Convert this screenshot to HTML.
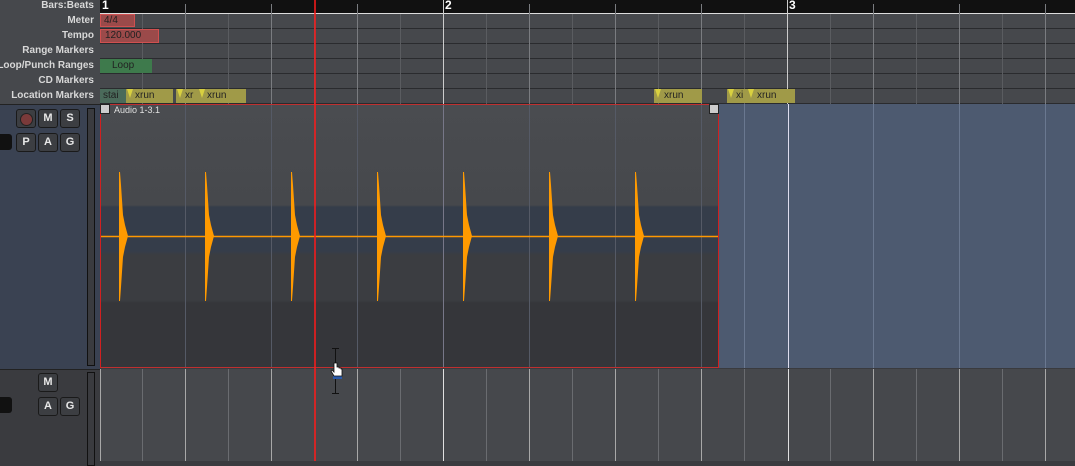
<!DOCTYPE html>
<html><head><style>
body{margin:0;width:1075px;height:461px;overflow:hidden;background:#3a3b3f;font-family:"Liberation Sans",sans-serif;position:relative}
.lab{position:absolute;right:981px;text-align:right;font-size:10px;font-weight:bold;color:#d8d8d8;height:15px;line-height:15px;white-space:nowrap}
.row{position:absolute;left:100px;right:0;height:14px;background:#46484c;border-bottom:1px solid #2a2b2e}
.btn{position:absolute;width:18px;height:17px;background:#3c3e42;border:1px solid #1a1a1a;border-radius:3px;color:#e8e8e8;font-size:11px;font-weight:bold;text-align:center;line-height:17px}
.mk{position:absolute;height:14px;background:#a09a48;font-size:10px;line-height:14px;color:#222;box-sizing:border-box;white-space:nowrap;overflow:hidden}
.mk i{position:absolute;left:1px;top:0;width:0;height:0;border-left:3px solid transparent;border-right:3px solid transparent;border-top:9px solid #d8d040}
</style></head><body>
<div style="position:absolute;left:0;top:0;width:100px;height:104px;background:#46484c"></div>
<div class="lab" style="top:-2px">Bars:Beats</div>
<div class="lab" style="top:13px">Meter</div>
<div class="lab" style="top:28px">Tempo</div>
<div class="lab" style="top:43px">Range Markers</div>
<div class="lab" style="top:58px">Loop/Punch Ranges</div>
<div class="lab" style="top:73px">CD Markers</div>
<div class="lab" style="top:88px">Location Markers</div>
<div style="position:absolute;left:100px;top:0;right:0;height:13px;background:#111;border-bottom:1px solid #ddd"></div>
<div style="position:absolute;left:102px;top:-2px;color:#fff;font-size:12px;font-weight:bold">1</div>
<div style="position:absolute;left:445px;top:-2px;color:#fff;font-size:12px;font-weight:bold">2</div>
<div style="position:absolute;left:789px;top:-2px;color:#fff;font-size:12px;font-weight:bold">3</div>
<div class="row" style="top:14px"></div>
<div class="row" style="top:29px"></div>
<div class="row" style="top:44px"></div>
<div class="row" style="top:59px"></div>
<div class="row" style="top:74px"></div>
<div class="row" style="top:89px"></div>
<svg style="position:absolute;left:0;top:0" width="1075" height="461">
<g stroke="#5a5c60" stroke-width="1">
<line x1="142.5" y1="14" x2="142.5" y2="104"/><line x1="228.5" y1="14" x2="228.5" y2="104"/><line x1="314.5" y1="14" x2="314.5" y2="104"/><line x1="400.5" y1="14" x2="400.5" y2="104"/><line x1="486.5" y1="14" x2="486.5" y2="104"/><line x1="572.5" y1="14" x2="572.5" y2="104"/><line x1="658.5" y1="14" x2="658.5" y2="104"/><line x1="744.5" y1="14" x2="744.5" y2="104"/><line x1="830.5" y1="14" x2="830.5" y2="104"/><line x1="916.5" y1="14" x2="916.5" y2="104"/><line x1="1002.5" y1="14" x2="1002.5" y2="104"/>
</g>
<g stroke="#7a7c80"><line x1="185.5" y1="4" x2="185.5" y2="104"/><line x1="271.5" y1="4" x2="271.5" y2="104"/><line x1="357.5" y1="4" x2="357.5" y2="104"/><line x1="529.5" y1="4" x2="529.5" y2="104"/><line x1="615.5" y1="4" x2="615.5" y2="104"/><line x1="701.5" y1="4" x2="701.5" y2="104"/><line x1="873.5" y1="4" x2="873.5" y2="104"/><line x1="959.5" y1="4" x2="959.5" y2="104"/><line x1="1045.5" y1="4" x2="1045.5" y2="104"/></g>
<g stroke="#ccc"><line x1="443.5" y1="0" x2="443.5" y2="104"/><line x1="787.5" y1="0" x2="787.5" y2="104"/></g>
</svg>
<div style="position:absolute;left:100px;top:14px;width:35px;height:13px;background:#9b4a4a;border:1px solid #d05050;box-sizing:border-box;font-size:10px;color:#222;line-height:11px;padding-left:3px">4/4</div>
<div style="position:absolute;left:100px;top:29px;width:59px;height:14px;background:#9b4a4a;border:1px solid #d05050;box-sizing:border-box;font-size:10px;color:#222;line-height:12px;padding-left:4px">120.000</div>
<div style="position:absolute;left:100px;top:59px;width:52px;height:14px;background:#3e7a4c;font-size:10px;color:#222;line-height:14px;padding-left:12px;box-sizing:border-box">Loop</div>
<div class="mk" style="left:100px;top:89px;width:26px;background:#4a6a5a;padding-left:3px">stai</div>
<div class="mk" style="left:126px;top:89px;width:47px;padding-left:9px"><i></i>xrun</div>
<div class="mk" style="left:176px;top:89px;width:22px;padding-left:9px"><i></i>xr</div>
<div class="mk" style="left:198px;top:89px;width:48px;padding-left:9px"><i></i>xrun</div>
<div class="mk" style="left:654px;top:89px;width:48px;padding-left:10px"><i></i>xrun</div>
<div class="mk" style="left:727px;top:89px;width:20px;padding-left:9px"><i></i>xi</div>
<div class="mk" style="left:747px;top:89px;width:48px;padding-left:10px"><i></i>xrun</div>
<!-- track headers -->
<div style="position:absolute;left:0;top:104px;width:100px;height:264px;background:#3a4252;border-top:1px solid #222"></div>
<div style="position:absolute;left:0;top:369px;width:100px;height:92px;background:#3a3b3f;border-top:1px solid #222"></div>
<div style="position:absolute;left:87px;top:108px;width:6px;height:256px;border:1px solid #111;background:#3a3b3f"></div>
<div style="position:absolute;left:87px;top:372px;width:6px;height:92px;border:1px solid #111;background:#3a3b3f"></div>
<div class="btn" style="left:16px;top:109px"><div style="width:11px;height:11px;border-radius:50%;background:#7a3a3a;border:1px solid #222;margin:3px auto"></div></div>
<div class="btn" style="left:38px;top:109px">M</div><div class="btn" style="left:60px;top:109px">S</div>
<div class="btn" style="left:16px;top:133px">P</div><div class="btn" style="left:38px;top:133px">A</div><div class="btn" style="left:60px;top:133px">G</div>
<div style="position:absolute;left:0;top:134px;width:12px;height:16px;background:#111;border-radius:0 3px 3px 0"></div>
<div class="btn" style="left:38px;top:373px">M</div>
<div class="btn" style="left:38px;top:397px">A</div><div class="btn" style="left:60px;top:397px">G</div>
<div style="position:absolute;left:0;top:397px;width:12px;height:16px;background:#111;border-radius:0 3px 3px 0"></div>
<!-- region -->
<div style="position:absolute;left:100px;top:104px;width:619px;height:264px;background:linear-gradient(#4a4c50 0,#46484c 100px,#353d4a 102px,#353d4a 146px,#3b3d41 150px,#3b3d41 195px,#35363a 198px);border-top:1px solid #c03030;border-bottom:1px solid #c03030;box-sizing:border-box"></div>
<div style="position:absolute;left:719px;top:104px;width:356px;height:264px;background:#4d5a70"></div>
<div style="position:absolute;left:100px;top:369px;width:975px;height:92px;background:#46484c"></div>
<svg style="position:absolute;left:0;top:0" width="1075" height="461">
<g stroke="#555a66"><line x1="185.5" y1="105" x2="185.5" y2="367"/><line x1="271.5" y1="105" x2="271.5" y2="367"/><line x1="357.5" y1="105" x2="357.5" y2="367"/><line x1="529.5" y1="105" x2="529.5" y2="367"/><line x1="615.5" y1="105" x2="615.5" y2="367"/><line x1="701.5" y1="105" x2="701.5" y2="367"/></g>
<g stroke="#778" ><line x1="443.5" y1="105" x2="443.5" y2="367"/></g>
<g stroke="#6a7890"><line x1="744.5" y1="104" x2="744.5" y2="368"/><line x1="873.5" y1="104" x2="873.5" y2="368"/><line x1="959.5" y1="104" x2="959.5" y2="368"/><line x1="1045.5" y1="104" x2="1045.5" y2="368"/></g>
<line x1="788.5" y1="104" x2="788.5" y2="368" stroke="#dde"/>
<g stroke="#6a6c70"><line x1="142.5" y1="369" x2="142.5" y2="461"/><line x1="228.5" y1="369" x2="228.5" y2="461"/><line x1="400.5" y1="369" x2="400.5" y2="461"/><line x1="486.5" y1="369" x2="486.5" y2="461"/><line x1="572.5" y1="369" x2="572.5" y2="461"/><line x1="658.5" y1="369" x2="658.5" y2="461"/><line x1="744.5" y1="369" x2="744.5" y2="461"/><line x1="830.5" y1="369" x2="830.5" y2="461"/><line x1="916.5" y1="369" x2="916.5" y2="461"/><line x1="1002.5" y1="369" x2="1002.5" y2="461"/></g>
<g stroke="#a8a8a8"><line x1="100.5" y1="369" x2="100.5" y2="461"/><line x1="185.5" y1="369" x2="185.5" y2="461"/><line x1="271.5" y1="369" x2="271.5" y2="461"/><line x1="357.5" y1="369" x2="357.5" y2="461"/><line x1="529.5" y1="369" x2="529.5" y2="461"/><line x1="615.5" y1="369" x2="615.5" y2="461"/><line x1="701.5" y1="369" x2="701.5" y2="461"/><line x1="873.5" y1="369" x2="873.5" y2="461"/><line x1="959.5" y1="369" x2="959.5" y2="461"/><line x1="1045.5" y1="369" x2="1045.5" y2="461"/></g>
<g stroke="#e0e0e0"><line x1="443.5" y1="369" x2="443.5" y2="461"/><line x1="788.5" y1="369" x2="788.5" y2="461"/></g>
<line x1="100" y1="236.5" x2="719" y2="236.5" stroke="#ff9800" stroke-width="1.5"/>
<g fill="#ff9a00">
<polygon id="t" points="119,172 120,172 121,185 122,200 123,215 125,225 128,236 125,247 123,257 122,272 121,287 120,301 119,301"/>
<use href="#t" x="86"/><use href="#t" x="172"/><use href="#t" x="258"/><use href="#t" x="344"/><use href="#t" x="430"/><use href="#t" x="516"/>
</g>
<line x1="100.5" y1="104" x2="100.5" y2="368" stroke="#d02020"/>
<line x1="718.5" y1="104" x2="718.5" y2="368" stroke="#d02020"/>
<rect x="100.5" y="104.5" width="9" height="9" fill="#ccc" stroke="#222"/>
<rect x="709.5" y="104.5" width="9" height="9" fill="#ccc" stroke="#222"/>
<line x1="315" y1="0" x2="315" y2="461" stroke="#ff1a1a" stroke-width="1.5"/>
<g stroke="#111"><line x1="335.5" y1="348" x2="335.5" y2="393"/><line x1="332" y1="348.5" x2="339" y2="348.5"/><line x1="332" y1="393.5" x2="339" y2="393.5"/></g>
<rect x="333" y="376" width="9" height="3" fill="#2a5aaa"/>
<path d="M334 363 v9 l-2 -2 l-1 1 l3 5 h8 v-7 h-1 v-1 h-2 v-1 h-2 v-4 z" fill="#fff" stroke="#111" stroke-width="0.8"/>
</svg>
<div style="position:absolute;left:114px;top:105px;font-size:9px;color:#e0e0e0">Audio 1-3.1</div>
</body></html>
